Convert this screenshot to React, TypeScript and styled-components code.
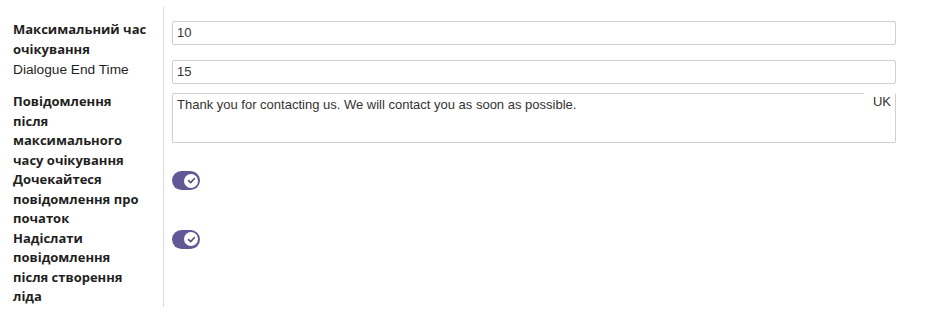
import React from "react";
import styled, { createGlobalStyle } from "styled-components";

const Global = createGlobalStyle`
  html, body { margin: 0; padding: 0; background: #ffffff; }
  body { font-family: "Liberation Sans", Arial, sans-serif; color: #212529; }
`;

const Form = styled.div`
  padding-top: 7px;
  width: 896px;
`;

const Row = styled.div`
  display: grid;
  grid-template-columns: 164px 1fr;
`;

const LabelCell = styled.div<{ $top?: number; $bottom?: number }>`
  border-right: 1px solid #dcdcdc;
  padding: ${(p) => p.$top ?? 0}px 15px ${(p) => p.$bottom ?? 0}px 13px;
`;

const Label = styled.div<{ $plain?: boolean }>`
  font-family: ${(p) =>
    p.$plain ? `"Liberation Sans", Arial, sans-serif` : `"Open Sans", "Noto Sans", sans-serif`};
  font-weight: ${(p) => (p.$plain ? 400 : 700)};
  font-size: ${(p) => (p.$plain ? "13.7px" : "13px")};
  line-height: 19.5px;
  color: #1f1f1f;
`;

const FieldCell = styled.div<{ $top?: number }>`
  padding: ${(p) => p.$top ?? 0}px 0 0 8px;
`;

const Input = styled.div`
  box-sizing: border-box;
  height: 24px;
  border: 1px solid #cfcfcf;
  border-radius: 2px;
  padding: 0 4px;
  font-size: 13px;
  line-height: 22px;
  color: #333;
`;

const TextAreaWrap = styled.div`
  display: flex;
  align-items: flex-start;
`;

const TextArea = styled.div`
  box-sizing: border-box;
  flex: 1;
  height: 50px;
  border: 1px solid #cfcfcf;
  border-right: none;
  border-radius: 2px 0 0 2px;
  padding: 3px 4px;
  font-size: 13px;
  line-height: 16px;
  color: #333;
`;

const LangBox = styled.div`
  box-sizing: border-box;
  width: 32px;
  height: 50px;
  border-right: 1px solid #cfcfcf;
  border-bottom: 1px solid #cfcfcf;
  border-radius: 0 2px 2px 0;
  display: flex;
  justify-content: flex-end;
  padding: 1px 4px 0 0;
  font-size: 13px;
  line-height: 16px;
  color: #333;
`;

const Toggle = styled.div`
  width: 28px;
  height: 19px;
  border-radius: 10px;
  background: #615896;
  display: flex;
  align-items: center;
  justify-content: flex-end;
  padding: 0 2px;
  box-sizing: border-box;
`;

const Knob = styled.div`
  width: 14px;
  height: 14px;
  border-radius: 50%;
  background: #ffffff;
  display: flex;
  align-items: center;
  justify-content: center;
`;

const Switch = () => (
  <Toggle>
    <Knob>
      <svg width="9" height="9" viewBox="0 0 8 8">
        <path d="M1.4 4.1 L3.3 5.9 L6.6 2.3" fill="none" stroke="#55507a" strokeWidth="1.4" strokeLinecap="round" strokeLinejoin="round" />
      </svg>
    </Knob>
  </Toggle>
);

export default function App() {
  return (
    <>
      <Global />
      <Form>
        <Row>
          <LabelCell $top={13} $bottom={1}>
            <Label>Максимальний час очікування</Label>
          </LabelCell>
          <FieldCell $top={14}>
            <Input>10</Input>
          </FieldCell>
        </Row>
        <Row>
          <LabelCell $bottom={12.5}>
            <Label $plain>Dialogue End Time</Label>
          </LabelCell>
          <FieldCell>
            <Input>15</Input>
          </FieldCell>
        </Row>
        <Row>
          <LabelCell>
            <Label>Повідомлення після максимального часу очікування</Label>
          </LabelCell>
          <FieldCell $top={1}>
            <TextAreaWrap>
              <TextArea>Thank you for contacting us. We will contact you as soon as possible.</TextArea>
              <LangBox>UK</LangBox>
            </TextAreaWrap>
          </FieldCell>
        </Row>
        <Row>
          <LabelCell>
            <Label>Дочекайтеся повідомлення про початок</Label>
          </LabelCell>
          <FieldCell $top={1}>
            <Switch />
          </FieldCell>
        </Row>
        <Row>
          <LabelCell>
            <Label>Надіслати повідомлення після створення ліда</Label>
          </LabelCell>
          <FieldCell $top={1}>
            <Switch />
          </FieldCell>
        </Row>
      </Form>
    </>
  );
}
